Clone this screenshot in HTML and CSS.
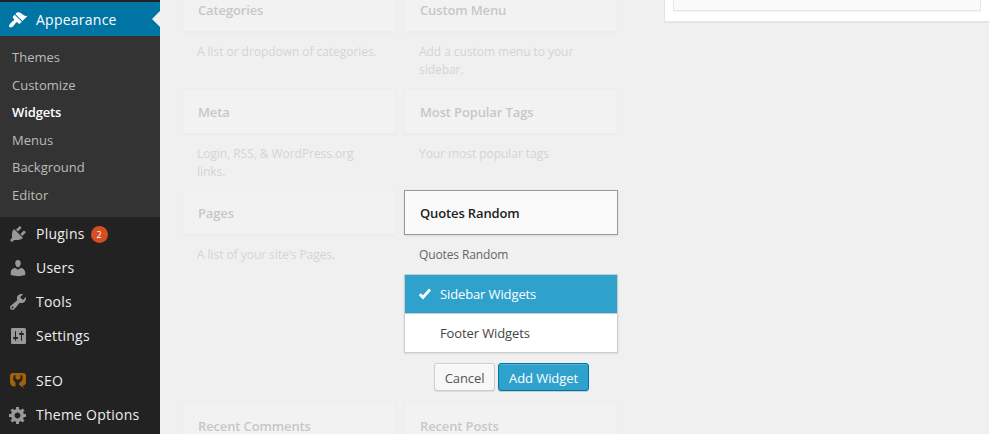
FILE: index.html
```html
<!DOCTYPE html>
<html lang="en">
<head>
<meta charset="utf-8">
<title>Widgets</title>
<link rel="stylesheet" href="styles.css">
</head>
<body>
<div class="page">
  <nav class="sidebar">
    <a class="item current">
      <svg class="icon" viewBox="0 0 20 20"><path d="M14.48 11.06 7.41 3.99l1.5-1.5c.5-.56 2.3-.47 3.51.32 1.21.8 1.43 1.28 2.91 2.1 1.18.64 2.45 1.26 4.45.85zm-.71.71L6.7 4.7 4.93 6.47c-.39.39-.39 1.02 0 1.41l1.06 1.06c.39.39.39 1.03 0 1.42-.6.6-1.43 1.11-2.21 1.69-.35.26-.7.53-1.01.84C1.43 14.23.4 16.08 1.4 17.07c.99 1 2.84-.03 4.18-1.36.31-.31.58-.66.85-1.02.57-.78 1.08-1.61 1.69-2.21.39-.39 1.02-.39 1.41 0l1.06 1.06c.39.39 1.02.39 1.41 0z"/></svg>
      <span>Appearance</span>
    </a>
    <div class="submenu">
      <a>Themes</a>
      <a>Customize</a>
      <a class="active">Widgets</a>
      <a>Menus</a>
      <a>Background</a>
      <a>Editor</a>
    </div>
    <a class="item">
      <svg class="icon" viewBox="0 0 20 20"><path d="M13.11 4.36 9.87 7.6 8 5.73l3.24-3.24c.35-.34 1.05-.2 1.56.32.52.51.66 1.21.31 1.55zm-8 1.77.91-1.12 9.01 9.01-1.19.84c-.71.71-2.63 1.16-3.82 1.16H6.14L4.9 17.26c-.59.59-1.54.59-2.12 0-.59-.58-.59-1.53 0-2.12l1.24-1.24v-3.88c0-1.13.4-3.19 1.09-3.89zm7.26 3.97 3.24-3.24c.34-.35 1.04-.21 1.55.31.52.51.66 1.21.31 1.55l-3.24 3.25z"/></svg>
      <span>Plugins</span><span class="badge">2</span>
    </a>
    <a class="item">
      <svg class="icon" viewBox="0 0 20 20"><path d="M10 9.25c-2.27 0-2.73-3.44-2.73-3.44C7 4.02 7.82 2 9.97 2c2.16 0 2.98 2.02 2.71 3.81 0 0-.41 3.44-2.68 3.44zm0 2.57L12.72 10c2.39 0 4.52 2.33 4.52 4.53v2.49s-3.65 1.13-7.24 1.13c-3.65 0-7.24-1.13-7.24-1.13v-2.49c0-2.25 1.94-4.48 4.47-4.48z"/></svg>
      <span>Users</span>
    </a>
    <a class="item">
      <svg class="icon" viewBox="0 0 20 20"><path d="M16.68 9.77c-1.34 1.34-3.3 1.67-4.95.99l-5.41 6.52c-.99.99-2.59.99-3.58 0s-.99-2.59 0-3.57l6.52-5.42c-.68-1.65-.35-3.61.99-4.95 1.28-1.28 3.12-1.62 4.72-1.06l-2.89 2.89 2.82 2.82 2.86-2.87c.53 1.58.18 3.39-1.08 4.65zM3.81 16.21c.4.39 1.04.39 1.43 0 .4-.4.4-1.04 0-1.43-.39-.4-1.03-.4-1.43 0-.39.39-.39 1.03 0 1.43z"/></svg>
      <span>Tools</span>
    </a>
    <a class="item">
      <svg class="icon" viewBox="0 0 20 20"><path fill-rule="evenodd" d="M18 16V4c0-1.100-.9-2-1-2H4C3 2 3 3 3 4v12c0 1 0 2 1 2h13c1 0 1-1 1-2zM8 11h1c.55 0 1 .45 1 1s-.45 1-1 1H8v1.500c0 .28-.22.5-.5.5s-.5-.22-.5-.5V13H6c-.55 0-1-.45-1-1s.45-1 1-1h1V5.500c0-.28.22-.5.5-.5s.5.220.5.5zm5-2h-1c-.55 0-1-.45-1-1s.45-1 1-1h1v-1.500c0-.28.22-.5.5-.5s.5.220.5.5V7h1c.55 0 1 .45 1 1s-.45 1-1 1h-1v5.500c0 .28-.22.5-.5.5s-.5-.22-.5-.5z"/></svg>
      <span>Settings</span>
    </a>
    <a class="item spaced">
      <svg class="icon seo" viewBox="0 0 20 20">
        <path d="M5 2h10c2 0 3 1 3 3v6c0 2-1 3.500-3.500 3.700L16 17.500 11.500 14 10 15.500H6.500C3.500 15.500 2 13.500 2 11V5c0-2 1-3 3-3z"/>
        <path class="cut" d="M7.500 3.500C4.500 5 4.300 9.500 7.500 11.300V17h3.800l-.3-4 .7-1.700C15.500 9.500 15.500 5 12.500 3.500v4L10 9 7.500 7.500z"/>
      </svg>
      <span>SEO</span>
    </a>
    <a class="item">
      <svg class="icon" viewBox="0 0 20 20"><path fill-rule="evenodd" d="M18 12h-2.180c-.17.7-.44 1.350-.81 1.930l1.540 1.540-2.100 2.100-1.540-1.540c-.58.36-1.230.63-1.910.79V19H8v-2.180c-.68-.16-1.330-.43-1.910-.79l-1.540 1.540-2.120-2.120 1.540-1.540c-.36-.58-.63-1.230-.79-1.910H1V9.030h2.170c.16-.7.440-1.350.8-1.940L2.430 5.550l2.100-2.100 1.540 1.540c.58-.37 1.240-.64 1.930-.81V2h3v2.180c.68.160 1.330.430 1.910.790l1.540-1.540 2.120 2.120-1.540 1.540c.36.590.640 1.240.8 1.940H18zm-8.500 1.500c1.660 0 3-1.340 3-3s-1.340-3-3-3-3 1.340-3 3 1.340 3 3 3z"/></svg>
      <span>Theme Options</span>
    </a>
  </nav>

  <main class="content">
    <section class="widgets">
      <article class="widget faded"><h3>Categories</h3><p>A list or dropdown of categories.</p></article>
      <article class="widget faded"><h3>Custom Menu</h3><p>Add a custom menu to your sidebar.</p></article>
      <article class="widget faded"><h3>Meta</h3><p>Login, RSS, &amp; WordPress.org links.</p></article>
      <article class="widget faded"><h3>Most Popular Tags</h3><p>Your most popular tags</p></article>
      <article class="widget faded"><h3>Pages</h3><p>A list of your site’s Pages.</p></article>
      <article class="widget selected">
        <h3>Quotes Random</h3><p>Quotes Random</p>
        <ul class="chooser">
          <li class="chosen"><svg class="check" viewBox="0 0 14 12"><path d="M1.800 6.200 5 9.400 12 1.500" fill="none" stroke="#fff" stroke-width="3"/></svg>Sidebar Widgets</li>
          <li>Footer Widgets</li>
        </ul>
        <div class="actions">
          <button class="button">Cancel</button>
          <button class="button primary">Add Widget</button>
        </div>
      </article>
      <article class="widget faded"><h3>Recent Comments</h3></article>
      <article class="widget faded"><h3>Recent Posts</h3></article>
    </section>
    <aside class="area"><div class="area-widget"></div></aside>
  </main>
</div>
</body>
</html>
```
FILE: styles.css
```css
* { box-sizing: border-box; }
body {
  margin: 0;
  background: #f0f0f0;
  font: 13px/18px "Open Sans", sans-serif;
  color: #444;
}
.page { display: flex; height: 434px; overflow: hidden; }

.sidebar {
  flex: 0 0 160px;
  padding-top: 2px;
  background: #222;
}
.item {
  display: flex;
  align-items: center;
  height: 34px;
  padding-left: 8px;
  font-size: 14px;
  letter-spacing: .24px;
  color: #eee;
}
.icon {
  width: 20px;
  height: 20px;
  margin-right: 8px;
  fill: #999;
}
.current {
  position: relative;
  padding-top: 1px;
  background: #0074a2;
  color: #fff;
}
.current .icon { fill: #fff; }
.current::after {
  content: "";
  position: absolute;
  right: 0;
  top: 9px;
  border: 8px solid transparent;
  border-left: 0;
  border-right-color: #f0f0f0;
}
.spaced { margin-top: 11px; }
.icon.seo { fill: #a36207; }
.seo .cut { fill: #222; }
.submenu {
  height: 181px;
  padding-top: 8px;
  background: #333;
}
.submenu a {
  display: block;
  padding: 5px 12px;
  line-height: 17.6px;
  color: #bbb;
}
.submenu .active { color: #fff; font-weight: 600; letter-spacing: -.12px; }
.badge {
  width: 17px;
  height: 17px;
  margin-left: 6px;
  border-radius: 50%;
  background: #d54e21;
  color: #fff;
  font-size: 9px;
  letter-spacing: 0;
  line-height: 17px;
  text-align: center;
}

.content {
  flex: 1;
  display: flex;
  align-items: flex-start;
}
.widgets {
  display: grid;
  grid-template-columns: 214px 214px;
  grid-template-rows: 102px 101px 213px 102px;
  column-gap: 8px;
  margin: -13px 46px 0 22px;
}
.widget h3 {
  height: 45px;
  margin: 0;
  padding: 0 15px;
  border: 1px solid #e5e5e5;
  background: #fafafa;
  box-shadow: 0 1px 1px rgba(0, 0, 0, .04);
  color: #222;
  font-size: 13px;
  font-weight: 600;
  letter-spacing: -.13px;
  line-height: 44px;
}
.widget p {
  margin: 0;
  padding: 11px 15px 0;
  color: #666;
  font-size: 12px;
  letter-spacing: -.05px;
}
.faded { opacity: .2; }
.selected h3 {
  border-color: #999;
  box-shadow: 0 1px 2px rgba(0, 0, 0, .1);
}
.selected p { letter-spacing: -.12px; }
.chooser {
  height: 79px;
  margin: 10px 0;
  padding: 0;
  border: 1px solid #ccc;
  background: #fff;
  box-shadow: 0 1px 2px rgba(0, 0, 0, .1);
  list-style: none;
}
.chooser li {
  position: relative;
  height: 38px;
  padding-left: 35px;
  letter-spacing: -.12px;
  line-height: 38px;
}
.chooser .chosen {
  height: 39px;
  border-bottom: 1px solid #ccc;
  background: #2ea2cc;
  color: #fff;
}
.check {
  position: absolute;
  left: 13px;
  top: 13px;
  width: 14px;
  height: 12px;
}
.actions {
  display: flex;
  gap: 3px;
  padding-left: 30px;
}
.button {
  width: 61px;
  height: 28px;
  padding: 1px 0 0;
  border: 1px solid #ccc;
  border-radius: 3px;
  background: #f7f7f7;
  box-shadow: inset 0 1px 0 #fff, 0 1px 0 rgba(0, 0, 0, .08);
  color: #555;
  font: 13px/26px "Open Sans", sans-serif;
  letter-spacing: -.08px;
}
.primary {
  width: 91px;
  border-color: #0074a2;
  background: #2ea2cc;
  box-shadow: inset 0 1px 0 rgba(120, 200, 230, .5), 0 1px 0 rgba(0, 0, 0, .15);
  color: #fff;
}
.area {
  flex: 1;
  height: 22px;
  padding: 0 8px 0 8px;
  border: solid #e5e5e5;
  border-width: 0 0 1px 1px;
  background: #fff;
  box-shadow: 0 1px 1px rgba(0, 0, 0, .04);
}
.area-widget {
  height: 11px;
  border: 1px solid #e5e5e5;
  border-top: 0;
  background: #fafafa;
  box-shadow: 0 1px 1px rgba(0, 0, 0, .04);
}
```
